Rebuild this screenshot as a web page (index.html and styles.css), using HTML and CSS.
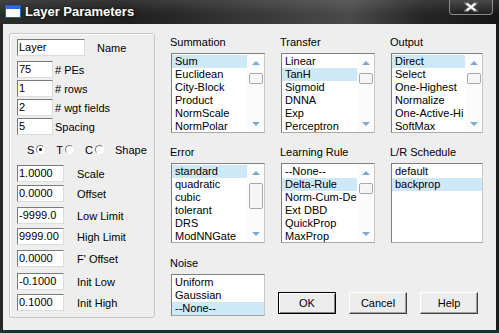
FILE: index.html
```html
<!DOCTYPE html>
<html lang="en">

<head>
    <meta charset="UTF-8">
    <meta name="viewport" content="width=device-width, initial-scale=1.0">

    <link rel="stylesheet" href="styles.css">

    <title>Layer Parameters</title>
</head>

<body>
    <div class="window">
        <div class="titlebar">
            <svg class="app_icon" width="16" height="13" viewBox="0 0 16 13">
                <rect x="0.5" y="0.5" width="15" height="12" fill="#ffffff" stroke="#1f5bc8" />
                <rect x="1" y="1" width="14" height="3" fill="#2b6de0" />
            </svg>
            <div class="caption">Layer Parameters</div>
            <div class="close">
                <svg width="14" height="10" viewBox="0 0 14 10">
                    <path d="M2 1 L12 9 M12 1 L2 9" stroke="#6a6a6a" stroke-width="4" stroke-linecap="square" />
                    <path d="M2.5 1.5 L11.5 8.5 M11.5 1.5 L2.5 8.5" stroke="#ffffff" stroke-width="2.2" />
                </svg>
            </div>
        </div>

        <div class="client">
            <!-- columna izquierda -->
            <div class="group">
                <div class="row">
                    <div class="input w_name">Layer</div>
                    <span class="lbl lbl_name">Name</span>
                </div>
                <div class="row mt5">
                    <div class="input w_small">75</div>
                    <span class="lbl lbl_small"># PEs</span>
                </div>
                <div class="row mt2">
                    <div class="input w_small">1</div>
                    <span class="lbl lbl_small"># rows</span>
                </div>
                <div class="row mt2">
                    <div class="input w_small">2</div>
                    <span class="lbl lbl_small"># wgt fields</span>
                </div>
                <div class="row mt2">
                    <div class="input w_small">5</div>
                    <span class="lbl lbl_small">Spacing</span>
                </div>

                <div class="radio_row">
                    <span>S</span><span class="radio checked"></span>
                    <span class="rl">T</span><span class="radio"></span>
                    <span class="rl">C</span><span class="radio"></span>
                    <span class="rl">Shape</span>
                </div>

                <div class="row">
                    <div class="input w_wide">1.0000</div>
                    <span class="lbl lbl_wide">Scale</span>
                </div>
                <div class="row mt3">
                    <div class="input w_wide">0.0000</div>
                    <span class="lbl lbl_wide">Offset</span>
                </div>
                <div class="row mt5">
                    <div class="input w_wide">-9999.0</div>
                    <span class="lbl lbl_wide">Low Limit</span>
                </div>
                <div class="row mt4">
                    <div class="input w_wide">9999.00</div>
                    <span class="lbl lbl_wide">High Limit</span>
                </div>
                <div class="row mt5">
                    <div class="input w_wide">0.0000</div>
                    <span class="lbl lbl_wide">F' Offset</span>
                </div>
                <div class="row mt6">
                    <div class="input w_wide">-0.1000</div>
                    <span class="lbl lbl_wide">Init Low</span>
                </div>
                <div class="row mt4">
                    <div class="input w_wide">0.1000</div>
                    <span class="lbl lbl_wide">Init High</span>
                </div>
            </div>

            <!-- listas -->
            <div class="lists">
                <div class="field">
                    <div class="title">Summation</div>
                    <div class="list">
                        <div class="items">
                            <div class="item sel">Sum</div>
                            <div class="item">Euclidean</div>
                            <div class="item">City-Block</div>
                            <div class="item">Product</div>
                            <div class="item">NormScale</div>
                            <div class="item">NormPolar</div>
                        </div>
                        <div class="scroll">
                            <span class="up"></span>
                            <span class="thumb"></span>
                            <span class="down"></span>
                        </div>
                    </div>
                </div>

                <div class="field">
                    <div class="title">Transfer</div>
                    <div class="list">
                        <div class="items">
                            <div class="item">Linear</div>
                            <div class="item sel">TanH</div>
                            <div class="item">Sigmoid</div>
                            <div class="item">DNNA</div>
                            <div class="item">Exp</div>
                            <div class="item">Perceptron</div>
                        </div>
                        <div class="scroll">
                            <span class="up"></span>
                            <span class="thumb"></span>
                            <span class="down"></span>
                        </div>
                    </div>
                </div>

                <div class="field">
                    <div class="title">Output</div>
                    <div class="list">
                        <div class="items">
                            <div class="item sel">Direct</div>
                            <div class="item">Select</div>
                            <div class="item">One-Highest</div>
                            <div class="item">Normalize</div>
                            <div class="item">One-Active-Hi</div>
                            <div class="item">SoftMax</div>
                        </div>
                        <div class="scroll">
                            <span class="up"></span>
                            <span class="thumb"></span>
                            <span class="down"></span>
                        </div>
                    </div>
                </div>

                <div class="field">
                    <div class="title">Error</div>
                    <div class="list">
                        <div class="items">
                            <div class="item sel">standard</div>
                            <div class="item">quadratic</div>
                            <div class="item">cubic</div>
                            <div class="item">tolerant</div>
                            <div class="item">DRS</div>
                            <div class="item">ModNNGate</div>
                        </div>
                        <div class="scroll">
                            <span class="up"></span>
                            <span class="thumb tall"></span>
                            <span class="down"></span>
                        </div>
                    </div>
                </div>

                <div class="field">
                    <div class="title">Learning Rule</div>
                    <div class="list">
                        <div class="items">
                            <div class="item">--None--</div>
                            <div class="item sel">Delta-Rule</div>
                            <div class="item">Norm-Cum-De</div>
                            <div class="item">Ext DBD</div>
                            <div class="item">QuickProp</div>
                            <div class="item">MaxProp</div>
                        </div>
                        <div class="scroll">
                            <span class="up"></span>
                            <span class="thumb"></span>
                            <span class="down"></span>
                        </div>
                    </div>
                </div>

                <div class="field">
                    <div class="title">L/R Schedule</div>
                    <div class="list">
                        <div class="items">
                            <div class="item">default</div>
                            <div class="item sel">backprop</div>
                        </div>
                    </div>
                </div>

                <div class="field noise">
                    <div class="title">Noise</div>
                    <div class="list short">
                        <div class="items">
                            <div class="item">Uniform</div>
                            <div class="item">Gaussian</div>
                            <div class="item sel">--None--</div>
                        </div>
                    </div>
                </div>

                <div class="buttons">
                    <div class="button default">OK</div>
                    <div class="button">Cancel</div>
                    <div class="button">Help</div>
                </div>
            </div>
        </div>
    </div>
</body>

</html>
```

FILE: styles.css
```css
body {
    margin: 0;
    background-color: #1c1c1c;
    font-family: 'Liberation Sans', Arial, sans-serif;
    font-size: 11px;
    color: #000000;
}

.window {
    width: 499px;
    height: 333px;
    display: flex;
    flex-direction: column;
    box-sizing: border-box;
    overflow: hidden;
    background: linear-gradient(to right, #262626, #1d1d1d 40%, #333333 70%, #1a1a1a);
    border-bottom: 3px solid #163433;
}

/* barra de titulo */
.titlebar {
    height: 24px;
    flex: none;
    display: flex;
    align-items: flex-start;
    padding-left: 5px;
    padding-right: 6px;
    background:
        linear-gradient(to bottom, rgba(255, 255, 255, 0.10), rgba(255, 255, 255, 0) 60%),
        linear-gradient(to right, #2c2c2c, #1e1e1e 25%, #3c3c3c 55%, #4a4a4a 70%, #252525 85%, #161616);
}

.app_icon {
    margin-top: 5px;
    flex: none;
}

.caption {
    margin-left: 4px;
    line-height: 24px;
    font-size: 13px;
    font-weight: bold;
    color: #ffffff;
    text-shadow: 0 0 3px rgba(0, 0, 0, 0.8);
    flex: 1;
}

.close {
    width: 44px;
    height: 15px;
    box-sizing: border-box;
    border: 1px solid #8c8c8c;
    border-top: 0;
    border-radius: 0 0 4px 4px;
    background: linear-gradient(to bottom, #4a4a4a, #202020);
    display: flex;
    align-items: center;
    justify-content: center;
}

/* area cliente */
.client {
    flex: 1;
    margin: 0 3px;
    background-color: #eeeeee;
    display: flex;
    padding: 9px 13px 0 6px;
    gap: 16px;
}

.group {
    width: 146px;
    height: 285px;
    box-sizing: border-box;
    border: 1px solid #c3c7ca;
    border-radius: 3px;
    box-shadow: inset 1px 1px #ffffff;
    padding: 5px 0 0 7px;
    display: flex;
    flex-direction: column;
}

.row {
    height: 17px;
    display: flex;
    align-items: center;
}

.mt2 { margin-top: 2px; }
.mt3 { margin-top: 3px; }
.mt4 { margin-top: 4px; }
.mt5 { margin-top: 5px; }
.mt6 { margin-top: 6px; }

.input {
    height: 17px;
    box-sizing: border-box;
    background-color: #ffffff;
    border: 1px solid;
    border-color: #7a7a7a #dcdcdc #dcdcdc #7a7a7a;
    padding-left: 1px;
    line-height: 15px;
    white-space: nowrap;
    overflow: hidden;
}

.w_name { width: 68px; }
.w_small { width: 36px; }
.w_wide { width: 47px; }

.lbl_name { margin-left: 12px; }
.lbl_small { margin-left: 2px; }
.lbl_wide { margin-left: 13px; }

.radio_row {
    height: 13px;
    margin-top: 8px;
    margin-bottom: 9px;
    padding-left: 10px;
    display: flex;
    align-items: center;
}

.radio {
    width: 9px;
    height: 9px;
    box-sizing: border-box;
    border-radius: 50%;
    border: 1px solid;
    border-color: #808080 #ffffff #ffffff #808080;
    background-color: #ffffff;
    margin-left: 2px;
    display: flex;
    align-items: center;
    justify-content: center;
}

.radio.checked::after {
    content: "";
    width: 3px;
    height: 3px;
    border-radius: 50%;
    background-color: #000000;
}

.rl {
    margin-left: 11px;
}

/* listas */
.lists {
    margin-top: 3px;
    display: grid;
    grid-template-columns: 94px 94px 92px;
    column-gap: 16px;
    row-gap: 13px;
    align-content: start;
}

.title {
    height: 13px;
    line-height: 13px;
    margin-bottom: 4px;
    margin-left: -1px;
    white-space: nowrap;
}

.list {
    height: 80px;
    box-sizing: border-box;
    background-color: #ffffff;
    border: 1px solid;
    border-color: #808080 #c8c8c8 #a8a8a8 #808080;
    display: flex;
    overflow: hidden;
}

.list.short {
    height: 42px;
}

.noise {
    margin-top: 1px;
}

.items {
    flex: 1;
    min-width: 0;
    padding-top: 1px;
}

.item {
    height: 13px;
    line-height: 13px;
    padding-left: 3px;
    white-space: nowrap;
    overflow: hidden;
}

.sel {
    background-color: #cde8f7;
}

.scroll {
    width: 17px;
    flex: none;
    display: flex;
    flex-direction: column;
    align-items: center;
    padding: 7px 0 6px;
    box-sizing: border-box;
    background-color: #fbfbfb;
}

.up {
    width: 0;
    height: 0;
    border-left: 4px solid transparent;
    border-right: 4px solid transparent;
    border-bottom: 4px solid #7ea8d0;
}

.down {
    width: 0;
    height: 0;
    margin-top: auto;
    border-left: 4px solid transparent;
    border-right: 4px solid transparent;
    border-top: 4px solid #7ea8d0;
}

.thumb {
    width: 14px;
    height: 11px;
    margin-top: 8px;
    box-sizing: border-box;
    border: 1px solid #a9a9a9;
    border-radius: 2px;
    background-color: #f6f6f6;
}

.thumb.tall {
    height: 26px;
}

/* botones */
.buttons {
    grid-column: 2 / 4;
    display: flex;
    gap: 13px;
    align-items: flex-end;
    margin-left: -3px;
    padding-bottom: 2px;
}

.button {
    width: 58px;
    height: 22px;
    box-sizing: border-box;
    background-color: #ececec;
    border: 1px solid;
    border-color: #ffffff #404040 #404040 #ffffff;
    box-shadow: inset -1px -1px #a0a0a0;
    text-align: center;
    line-height: 20px;
}

.button.default {
    border-color: #000000;
    box-shadow: inset 1px 1px #ffffff, inset -1px -1px #808080;
}
```
